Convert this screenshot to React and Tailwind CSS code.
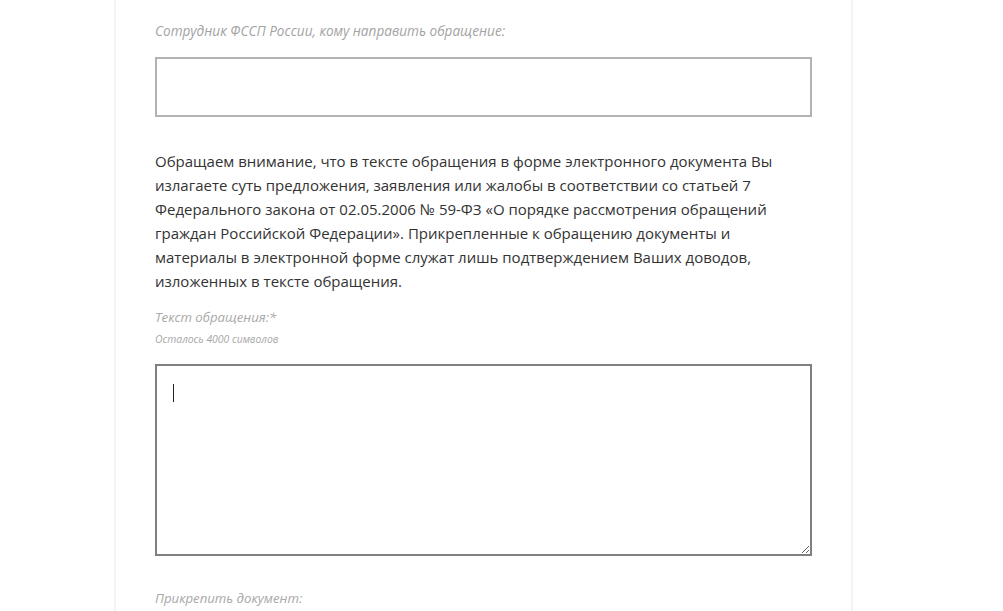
import React from 'react';

export default function App() {
  return (
    <div className="min-h-[611px] bg-white" style={{ fontFamily: '"Open Sans", "Noto Sans", sans-serif' }}>
      <div className="ml-[114px] w-[739px] min-h-[611px] border-x-2 border-[#f3f5f5] bg-white px-[39px] pt-[22px]">
        <label className="block text-[13.6px] italic leading-[18px] text-[#a3a3a3]">
          Сотрудник ФССП России, кому направить обращение:
        </label>
        <input type="text" className="mt-[17px] block h-[60px] w-[657px] border-2 border-[#b3b3b3] bg-white outline-none" />

        <p className="mt-[32px] text-[15px] leading-[24px] text-[#333333]">
          Обращаем внимание, что в тексте обращения в форме электронного документа Вы<br />
          излагаете суть предложения, заявления или жалобы в соответствии со статьей 7<br />
          Федерального закона от 02.05.2006 № 59-ФЗ «О порядке рассмотрения обращений<br />
          граждан Российской Федерации». Прикрепленные к обращению документы и<br />
          материалы в электронной форме служат лишь подтверждением Ваших доводов,<br />
          изложенных в тексте обращения.
        </p>

        <label className="mt-[14px] block text-[13.2px] italic leading-[20px] text-[#a8a8a8]">
          Текст обращения:*
        </label>
        <div className="mt-[5px] text-[10.4px] italic leading-[14px] text-[#a8a8a8]">Осталось 4000 символов</div>

        <div className="relative mt-[18px] w-[657px]">
          <textarea className="block h-[192px] w-[657px] resize-y border-2 border-[#808080] bg-white outline-none" />
          <span className="absolute left-[18px] top-[20px] h-[18px] w-px bg-[#222]" />
        </div>

        <label className="mt-[32px] block text-[13.2px] italic leading-[20px] text-[#a8a8a8]">
          Прикрепить документ:
        </label>
      </div>
    </div>
  );
}
